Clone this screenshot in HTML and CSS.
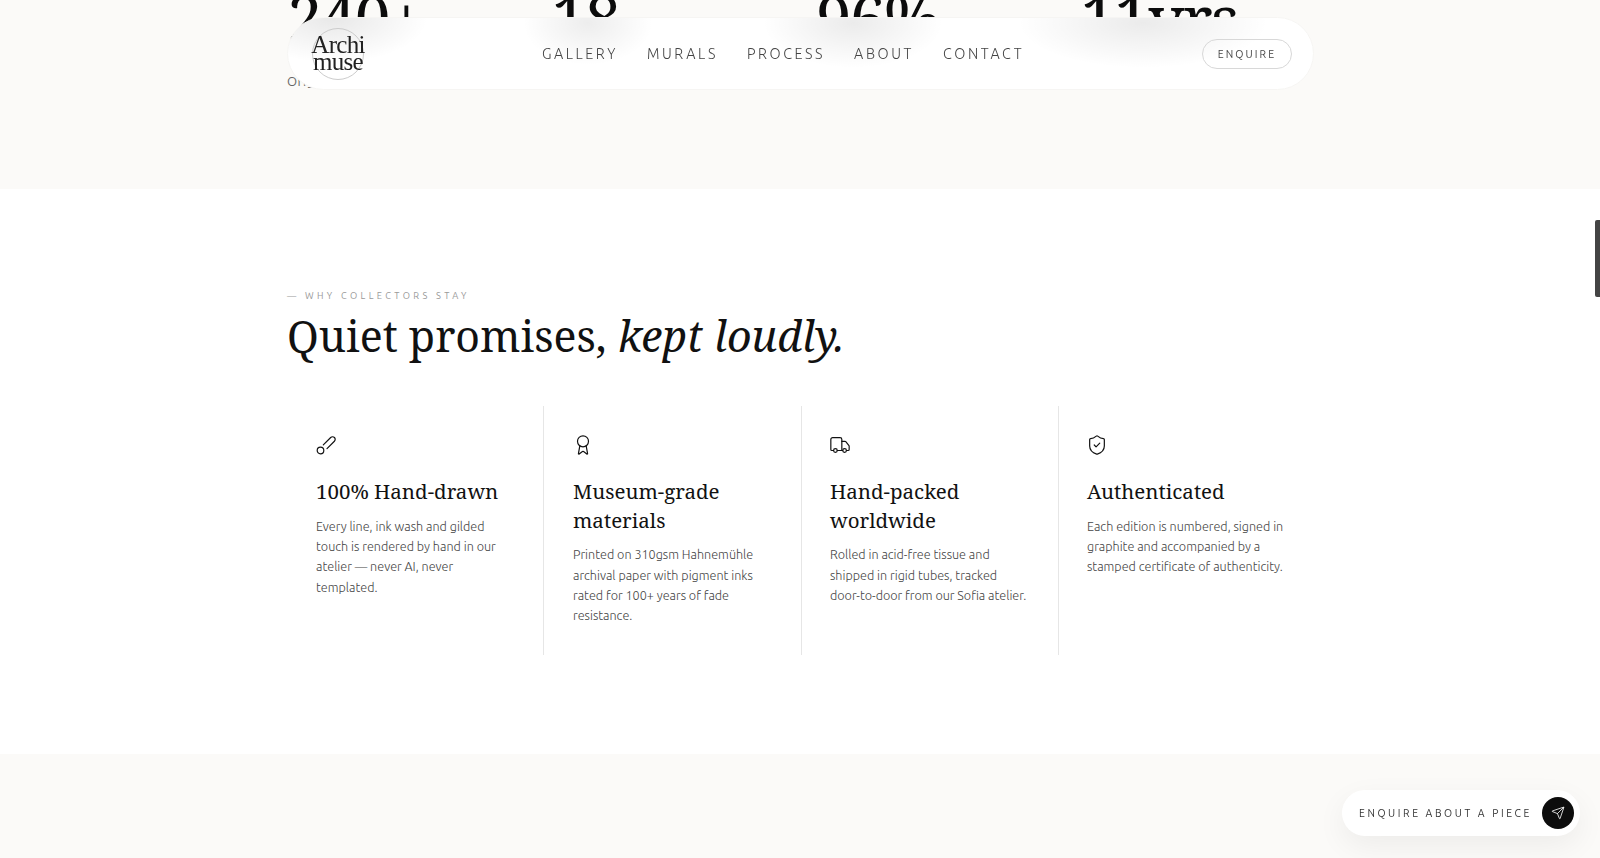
FILE: index.html
```html
<!DOCTYPE html>
<html lang="en">
<head>
  <meta charset="UTF-8" />
  <meta name="viewport" content="width=device-width, initial-scale=1.0" />
  <title>Archimuse</title>
  <link rel="stylesheet" href="styles.css">
</head>
<body>
  <section class="stats">
    <div class="wrap stats-grid">
      <div><div class="stat-num">240+</div><div class="stat-label">Original works</div></div>
      <div><div class="stat-num">18</div><div class="stat-label">Countries</div></div>
      <div><div class="stat-num">96%</div><div class="stat-label">Returning collectors</div></div>
      <div><div class="stat-num">11yrs</div><div class="stat-label">In the atelier</div></div>
    </div>
  </section>

  <section class="promises">
    <div class="wrap">
      <p class="eyebrow">— WHY COLLECTORS STAY</p>
      <h2>Quiet promises, <em>kept loudly.</em></h2>
      <div class="cards">
        <article class="card">
          <svg class="icon" viewBox="0 0 24 24"><path d="m9.06 11.9 8.07-8.06a2.85 2.85 0 1 1 4.03 4.03l-8.06 8.08"/><circle cx="6" cy="18" r="3.6"/></svg>
          <h3>100% Hand-drawn</h3>
          <p>Every line, ink wash and gilded touch is rendered by hand in our atelier — never AI, never templated.</p>
        </article>
        <article class="card">
          <svg class="icon" viewBox="0 0 24 24"><path d="m15.477 12.89 1.515 8.526a.5.5 0 0 1-.81.47l-3.58-2.687a1 1 0 0 0-1.197 0l-3.586 2.686a.5.5 0 0 1-.81-.469l1.514-8.526"/><circle cx="12" cy="8" r="6"/></svg>
          <h3>Museum-grade materials</h3>
          <p>Printed on 310gsm Hahnemühle archival paper with pigment inks rated for 100+ years of fade resistance.</p>
        </article>
        <article class="card">
          <svg class="icon" viewBox="0 0 24 24"><path d="M14 18V6a2 2 0 0 0-2-2H4a2 2 0 0 0-2 2v11a1 1 0 0 0 1 1h2"/><path d="M15 18H9"/><path d="M19 18h2a1 1 0 0 0 1-1v-3.65a1 1 0 0 0-.22-.624l-3.48-4.35A1 1 0 0 0 17.52 8H14"/><circle cx="17" cy="18" r="2"/><circle cx="7" cy="18" r="2"/></svg>
          <h3>Hand-packed worldwide</h3>
          <p>Rolled in acid-free tissue and shipped in rigid tubes, tracked door-to-door from our Sofia atelier.</p>
        </article>
        <article class="card">
          <svg class="icon" viewBox="0 0 24 24"><path d="M20 13c0 5-3.5 7.5-7.66 8.95a1 1 0 0 1-.67-.01C7.5 20.5 4 18 4 13V6a1 1 0 0 1 1-1c2 0 4.5-1.2 6.24-2.72a1.17 1.17 0 0 1 1.52 0C14.51 3.81 17 5 19 5a1 1 0 0 1 1 1z"/><path d="m9 12 2 2 4-4"/></svg>
          <h3>Authenticated</h3>
          <p>Each edition is numbered, signed in graphite and accompanied by a stamped certificate of authenticity.</p>
        </article>
      </div>
    </div>
  </section>

  <section class="next"></section>

  <header class="nav">
    <a class="logo"><span>Archi</span><span>muse</span></a>
    <nav class="nav-links">
      <a>GALLERY</a>
      <a>MURALS</a>
      <a>PROCESS</a>
      <a>ABOUT</a>
      <a>CONTACT</a>
    </nav>
    <a class="nav-btn">ENQUIRE</a>
  </header>

  <a class="float-cta">
    <span>ENQUIRE ABOUT A PIECE</span>
    <span class="float-icon">
      <svg viewBox="0 0 24 24"><path d="M14.536 21.686a.5.5 0 0 0 .937-.024l6.5-19a.496.496 0 0 0-.635-.635l-19 6.5a.5.5 0 0 0-.024.937l7.93 3.18a2 2 0 0 1 1.112 1.11z"/><path d="m21.854 2.147-10.94 10.939"/></svg>
    </span>
  </a>

  <div class="scroll-thumb"></div>
</body>
</html>
```

FILE: styles.css
```css
* {
  box-sizing: border-box;
}

body {
  margin: 0;
  font-family: 'Ubuntu', 'Noto Sans', sans-serif;
  background: #fbfaf8;
  color: #111;
}

.wrap {
  width: 1026px;
  margin: 0 auto;
}

/* nav */
.nav {
  position: fixed;
  top: 17px;
  left: 287px;
  width: 1027px;
  height: 73px;
  padding: 0 21px 0 24px;
  display: flex;
  align-items: center;
  justify-content: space-between;
  /* opaque, the blurred numbers behind it are painted as soft smudges */
  background-color: #fff;
  background-repeat: no-repeat;
  background-image:
    radial-gradient(ellipse 95px 45px at 45px 0, rgba(0, 0, 0, 0.09), transparent),
    radial-gradient(ellipse 65px 42px at 300px 5px, rgba(0, 0, 0, 0.07), transparent),
    radial-gradient(ellipse 90px 45px at 565px 5px, rgba(0, 0, 0, 0.08), transparent),
    radial-gradient(ellipse 125px 45px at 855px 5px, rgba(0, 0, 0, 0.08), transparent);
  border: 1px solid #f6f5f3;
  border-radius: 37px;
  z-index: 5;
}

.logo {
  width: 52px;
  height: 52px;
  padding-bottom: 2px;
  border: 1px solid #ccc;
  border-radius: 50%;
  display: flex;
  flex-direction: column;
  align-items: center;
  justify-content: center;
  font-family: 'Liberation Serif', serif;
  font-size: 25px;
  line-height: 17px;
  letter-spacing: -0.7px;
  color: #222;
}

.nav-links {
  display: flex;
  gap: 29px;
}

.nav-links a {
  font-size: 14.4px;
  font-weight: 300;
  letter-spacing: 0.18em;
  color: #444;
}

.nav-btn {
  width: 90px;
  height: 30px;
  border: 1px solid #d8d8d8;
  border-radius: 15px;
  display: flex;
  align-items: center;
  justify-content: center;
  font-size: 10.5px;
  letter-spacing: 0.2em;
  color: #444;
}

/* stats */
.stats {
  height: 189px;
  overflow: hidden;
  background: #fbfaf8;
}

.stats-grid {
  display: grid;
  grid-template-columns: repeat(4, 1fr);
  gap: 32px;
  margin-top: -22px;
}

.stat-num {
  font-family: 'Noto Serif', 'DejaVu Serif', serif;
  font-size: 64px;
  line-height: 80px;
  letter-spacing: -0.03em;
  color: #0c0c0c;
}

.stat-label {
  margin-top: 16px;
  font-size: 13px;
  letter-spacing: 0.04em;
  color: #666;
}

/* promises */
.promises {
  height: 565px;
  padding-top: 101px;
  background: #fff;
}

.eyebrow {
  margin: 0;
  font-size: 9.3px;
  line-height: 12px;
  letter-spacing: 0.36em;
  color: #999;
}

h2 {
  margin: 5px 0 0;
  font-family: 'Noto Serif', 'DejaVu Serif', serif;
  font-size: 42.85px;
  line-height: 58px;
  font-weight: 400;
  color: #111;
}

.cards {
  display: grid;
  grid-template-columns: 256px 258px 257px 1fr;
  margin-top: 41px;
}

.card {
  height: 249px;
  padding: 28px 20px 0 28px;
  border-left: 1px solid #e6e6e6;
}

.card:first-child {
  border-left: none;
}

.card:nth-child(-n+2) {
  padding-left: 29px;
}

.icon {
  display: block;
  width: 22px;
  height: 22px;
  margin-left: -1px;
  fill: none;
  stroke: #111;
  stroke-width: 1.3;
  stroke-linecap: round;
  stroke-linejoin: round;
}

h3 {
  margin: 21px 0 0;
  font-family: 'Noto Serif', 'DejaVu Serif', serif;
  font-size: 20.5px;
  line-height: 28.6px;
  font-weight: 400;
  color: #111;
}

.card p {
  max-width: 198px;
  margin: 10px 0 0;
  font-size: 12.6px;
  font-weight: 300;
  line-height: 20.4px;
  color: #444;
}

.next {
  height: 104px;
}

/* floating button */
.float-cta {
  position: fixed;
  right: 20px;
  bottom: 22px;
  width: 238px;
  height: 46px;
  padding: 0 6px 0 17px;
  display: flex;
  align-items: center;
  justify-content: space-between;
  background: #fff;
  border-radius: 23px;
  box-shadow: 0 10px 30px rgba(0, 0, 0, 0.06);
  font-size: 10.4px;
  letter-spacing: 0.25em;
  color: #333;
  z-index: 6;
}

.float-icon {
  width: 32px;
  height: 32px;
  border-radius: 50%;
  background: #0d0d0d;
  display: flex;
  align-items: center;
  justify-content: center;
}

.float-icon svg {
  width: 14px;
  height: 14px;
  fill: none;
  stroke: #fff;
  stroke-width: 1.4;
  stroke-linecap: round;
  stroke-linejoin: round;
}

.scroll-thumb {
  position: fixed;
  top: 220px;
  right: 0;
  width: 5px;
  height: 77px;
  background: #444;
  border-radius: 2px 0 0 2px;
  z-index: 7;
}
```
